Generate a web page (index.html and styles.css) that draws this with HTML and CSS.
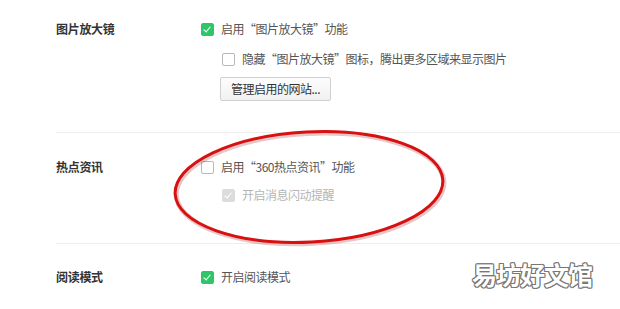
FILE: index.html
```html
<!DOCTYPE html>
<html lang="zh-CN">
<head>
<meta charset="utf-8">
<link rel="stylesheet" href="styles.css">
</head>
<body>
<div class="page">
  <section class="section s1">
    <div class="label">图片放大镜</div>
    <div class="content">
      <div class="row"><span class="cb on"></span><span class="txt">启用“图片放大镜”功能</span></div>
      <div class="row sub r2"><span class="cb"></span><span class="txt">隐藏“图片放大镜”图标，腾出更多区域来显示图片</span></div>
      <div class="sub"><button class="btn">管理启用的网站...</button></div>
    </div>
  </section>
  <section class="section s2">
    <div class="label">热点资讯</div>
    <div class="content">
      <div class="row"><span class="cb"></span><span class="txt">启用“360热点资讯”功能</span></div>
      <div class="row sub r3 disabled"><span class="cb dis"></span><span class="txt">开启消息闪动提醒</span></div>
    </div>
  </section>
  <section class="section s3">
    <div class="label">阅读模式</div>
    <div class="content">
      <div class="row"><span class="cb on"></span><span class="txt">开启阅读模式</span></div>
    </div>
  </section>

  <svg class="circle" width="620" height="309" viewBox="0 0 620 309">
    <ellipse cx="309" cy="187" rx="134" ry="55" fill="none" stroke="#9a1b1b" stroke-opacity="0.25" stroke-width="5" transform="rotate(-3 309 187) translate(1 1.5)"/>
    <ellipse cx="309" cy="187" rx="134" ry="55" fill="none" stroke="#d81010" stroke-width="3" transform="rotate(-3 309 187)"/>
  </svg>
  <div class="watermark">易坊好文馆</div>
</div>
</body>
</html>
```

FILE: styles.css
```css
html, body {
  margin: 0;
  padding: 0;
  background: #fff;
}
body {
  font-family: "Noto Sans CJK SC", "Microsoft YaHei", sans-serif;
  font-size: 12px;
  color: #555;
}
.page {
  position: relative;
  width: 620px;
  height: 309px;
  overflow: hidden;
  padding-left: 56px;
  box-sizing: border-box;
}
.section {
  display: grid;
  grid-template-columns: 145px 1fr;
  border-bottom: 1px solid #eeeeee;
}
.s1 { padding: 20px 0 31px; }
.s2 { padding: 25px 0 39px; }
.s3 { padding: 24px 0 20px; border-bottom: none; }
.label {
  font-weight: bold;
  color: #333;
  line-height: 18px;
  height: 18px;
  letter-spacing: -0.3px;
}
.content {
  display: flex;
  flex-direction: column;
}
.row {
  display: flex;
  align-items: center;
  height: 18px;
  line-height: 18px;
}
.txt { letter-spacing: -0.5px; }
.sub { padding-left: 21px; }
.r2 { margin-top: 12px; }
.r3 { margin-top: 10px; }
.cb {
  box-sizing: border-box;
  width: 13px;
  height: 13px;
  border: 1px solid #b9b9b9;
  border-radius: 2px;
  background: #fff;
  margin-right: 7px;
  position: relative;
  flex: none;
}
.cb.on {
  background: #2fc66a;
  border-color: #2fc66a;
}
.cb.dis {
  background: #dcdcdc;
  border-color: #dcdcdc;
}
.cb.on::after, .cb.dis::after {
  content: "";
  position: absolute;
  left: 3px;
  top: 1px;
  width: 3px;
  height: 6px;
  border: solid #fff;
  border-width: 0 1.5px 1.5px 0;
  transform: rotate(40deg);
}
.disabled .txt { color: #b5b5b5; }
.btn {
  margin-top: 9px;
  margin-left: -2px;
  font-family: inherit;
  font-size: 12px;
  letter-spacing: -0.5px;
  color: #333;
  height: 24px;
  padding: 0 10px;
  border: 1px solid #d0d0d0;
  border-radius: 2px;
  background: linear-gradient(#fdfdfd, #f1f1f1);
  line-height: 22px;
}
.circle {
  position: absolute;
  left: 0;
  top: 0;
  pointer-events: none;
}
.watermark {
  position: absolute;
  left: 472px;
  top: 258px;
  font-size: 25px;
  line-height: 32px;
  font-weight: bold;
  color: #fff;
  letter-spacing: -1px;
  text-shadow:
    1px 0 0 #777, -1px 0 0 #777, 0 1px 0 #777, 0 -1px 0 #777,
    1px 1px 0 #777, -1px -1px 0 #777, 1px -1px 0 #777, -1px 1px 0 #777;
}
```
